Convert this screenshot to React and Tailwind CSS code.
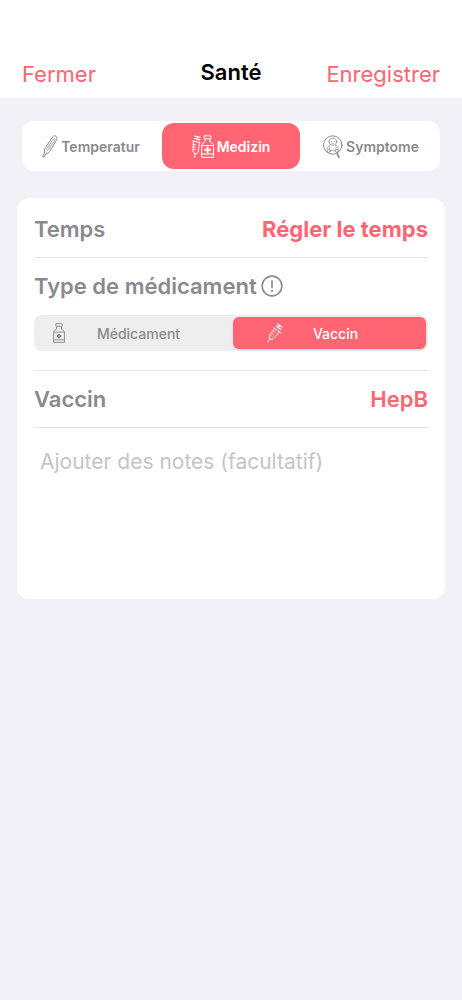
import { useState } from "react";

function ThermometerIcon({ className }) {
  return (
    <svg viewBox="0 0 16 23" fill="none" stroke="currentColor" strokeWidth="1" strokeLinecap="round" strokeLinejoin="round" className={className}>
      <path d="M10.6 1.9c1.1-1.4 2.7-1.3 3.6-.5.9.7 1.1 2 .5 3.3L8 16.2c-.4.7-1 1.2-1.8 1.6l-2.3 1.1-2 3c-.6.7-1.4.1-1-.7l1.5-3.2.1-2.800c0-.9.3-1.6.8-2.3z" />
      <path d="M11.3 4c.5-.7 1.2-.7 1.5-.4.3.3.3.8 0 1.3L7 14.3c-.5.8-1.2 1.2-1.800.9-.6-.4-.5-1.2 0-2z" strokeWidth=".7" />
      <path d="M8.2 8.200l1.100.7M7 10l1.100.7M5.800 11.800l1.100.7" strokeWidth=".6" />
    </svg>
  );
}

function BottleIcon({ className }) {
  return (
    <svg viewBox="0 0 14 22" fill="none" stroke="currentColor" strokeWidth="1" strokeLinejoin="round" className={className}>
      <rect x="3.5" y=".7" width="7" height="3" rx=".5" />
      <path d="M4.3 3.7v3.100C3 7.700 1 8.300 1 10.500v10.800h12V10.500c0-2.200-2-2.800-3.300-3.700V3.700" />
      <path d="M1 10h12M1 18.500h12" />
      <path d="M7 11.800v5M4.500 14.300h5" strokeWidth="2" />
    </svg>
  );
}

function SyringeBottleIcon({ className }) {
  return (
    <svg viewBox="0 0 22 23" fill="none" stroke="currentColor" strokeWidth="1" strokeLinejoin="round" strokeLinecap="round" className={className}>
      <path d="M3 1.200l5 1.200M5.500 1.900L5 4.300M2.300 3.500l5.400 1.300" strokeWidth="1.200" />
      <path d="M.7 5.900l7.200 1.600M1.500 6.200L.9 15.800l1.200 2.500 2.100.5 2-1.700 1.300-9.600M3 18.500l-.3 4" />
      <path d="M1.200 9.200l2.600.5M1.100 11.700l2.600.5M1 14.200l2.500.5" strokeWidth=".8" />
      <rect x="12.300" y=".8" width="6.600" height="3" rx=".5" />
      <path d="M13.300 3.800v3c-1.400.9-3.600 1.500-3.600 3.700v11.800h11.800V10.500c0-2.200-2.200-2.800-3.600-3.700v-3M9.700 10.500h11.800M9.700 19h11.800" />
      <path d="M15.600 12.200v5.200M13 14.800h5.200" strokeWidth="2" />
    </svg>
  );
}

function SyringeIcon({ className }) {
  return (
    <svg viewBox="0 0 16 20" fill="none" stroke="currentColor" strokeWidth=".9" strokeLinecap="round" strokeLinejoin="round" className={className}>
      <path d="M10.500.9l4.300 3M12.600 2.400l-1.500 2.300M9.300 3.200l4.600 3.200" strokeWidth="1.200" />
      <path d="M6.500 4.700l7.500 5.200M7.600 5.500L2.500 12.300l-.1 3.200 1.500 1 3.100-1.200 5.500-6.700M3 16l-2.400 3.400" />
      <path d="M6.500 8.200l1.800 1.200M5 10.300l1.800 1.200M3.600 12.300l1.700 1.200" strokeWidth=".7" />
    </svg>
  );
}

function SymptomIcon({ className }) {
  return (
    <svg viewBox="0 0 20 23" fill="none" stroke="currentColor" strokeWidth="1" strokeLinecap="round" className={className}>
      <circle cx="9.800" cy="10" r="9.200" />
      <path d="M14.200 18.500l1.600 3.700" strokeWidth="1.700" />
      <g strokeWidth=".7">
        <circle cx="9.800" cy="6.700" r="3.700" />
        <path d="M6.200 6c-1-.1-1 1.500.2 1.700M13.400 6c1-.1 1 1.500-.2 1.700M9.800 3c-.6.700.2 1.200.6.700M8.500 8.300c.8.800 1.800.8 2.600 0" />
        <path d="M8.300 6.300v.2M11.300 6.300v.2" strokeWidth="1" />
        <path d="M7.300 10c-2 .8-3 2.400-3.400 4.200M12.300 10c2 .8 3 2.400 3.400 4.200M6.600 12.300v2.500M13 12.300v2.500M9.800 15.300c-1.500 0-2.500.3-3.200 1M9.800 15.300c1.500 0 2.500.3 3.200 1" />
        <circle cx="5.800" cy="16" r="1.500" />
        <circle cx="13.800" cy="16" r="1.500" />
      </g>
    </svg>
  );
}

function InfoIcon({ className }) {
  return (
    <svg viewBox="0 0 22 22" fill="none" stroke="currentColor" strokeWidth="1.600" strokeLinecap="round" className={className}>
      <circle cx="11" cy="11" r="9.900" />
      <path d="M11 6v6.500" />
      <path d="M11 15.700v.2" strokeWidth="2" />
    </svg>
  );
}

const tabs = [
  { id: "temperature", label: "Temperatur", Icon: ThermometerIcon, size: "h-[23px] w-4" },
  { id: "medicine", label: "Medizin", Icon: SyringeBottleIcon, size: "h-[23px] w-[22px]" },
  { id: "symptoms", label: "Symptome", Icon: SymptomIcon, size: "h-[23px] w-5" }
];

const types = [
  { id: "drug", label: "Médicament", Icon: BottleIcon },
  { id: "vaccine", label: "Vaccin", Icon: SyringeIcon }
];

export default function App() {
  const [tab, setTab] = useState("medicine");
  const [type, setType] = useState("vaccine");

  return (
    <div className="min-h-screen bg-[#f2f1f7] font-['Inter',sans-serif] text-[#8a8a8e]">
      <header className="grid grid-cols-[1fr_auto_1fr] items-end bg-white px-[22px] pt-14 pb-2 text-[22px] leading-8">
        <button type="button" className="justify-self-start text-[#ff6572]">Fermer</button>
        <h1 className="pb-[2px] font-semibold text-black">Santé</h1>
        <button type="button" className="justify-self-end text-[#ff6572]">Enregistrer</button>
      </header>

      <main className="px-[17px] pt-[23px]">
        <nav className="mx-[5px] grid h-[50px] grid-cols-3 gap-[2px] rounded-xl bg-white py-[2px]">
          {tabs.map(({ id, label, Icon, size }) => (
            <button
              key={id}
              type="button"
              aria-pressed={tab === id}
              onClick={() => setTab(id)}
              className={`flex items-center justify-center gap-[3px] rounded-xl text-[14px] font-semibold ${tab === id ? "bg-[#ff6572] text-white" : ""}`}
            >
              <Icon className={`shrink-0 ${size}`} />
              {label}
            </button>
          ))}
        </nav>

        <section className="mt-[27px] rounded-xl bg-white px-[17px] text-[22px] font-semibold">
          <div className="flex h-[60px] items-center justify-between border-b border-[#e4e4e6] pt-[3px]">
            <span>Temps</span>
            <button type="button" className="font-bold text-[#ff6572]">Régler le temps</button>
          </div>

          <div className="border-b border-[#e4e4e6] pt-3 pb-[19px]">
            <div className="flex items-center gap-1 leading-8">
              <h2>Type de médicament</h2>
              <button type="button" aria-label="Informations">
                <InfoIcon className="size-[22px]" />
              </button>
            </div>
            <div className="mt-[13px] grid h-9 grid-cols-2 gap-1 rounded-lg bg-[#eeeeef] p-[2px]">
              {types.map(({ id, label, Icon }) => (
                <button
                  key={id}
                  type="button"
                  aria-pressed={type === id}
                  onClick={() => setType(id)}
                  className={`flex items-center justify-center gap-[30px] rounded-md pr-[34px] text-[14px] font-medium ${type === id ? "bg-[#ff6572] text-white shadow" : ""}`}
                >
                  <Icon className="h-5 w-4 shrink-0" />
                  {label}
                </button>
              ))}
            </div>
          </div>

          <div className="flex h-[57px] items-center justify-between border-b border-[#e4e4e6]">
            <span>Vaccin</span>
            <button type="button" className="text-[#ff6572]">HepB</button>
          </div>

          <textarea
            aria-label="Notes"
            placeholder="Ajouter des notes (facultatif)"
            className="block h-[171px] w-full resize-none px-[6px] pt-[18px] text-[21px] leading-8 font-normal outline-none placeholder:text-[#c5c5c7]"
          />
        </section>
      </main>
    </div>
  );
}
